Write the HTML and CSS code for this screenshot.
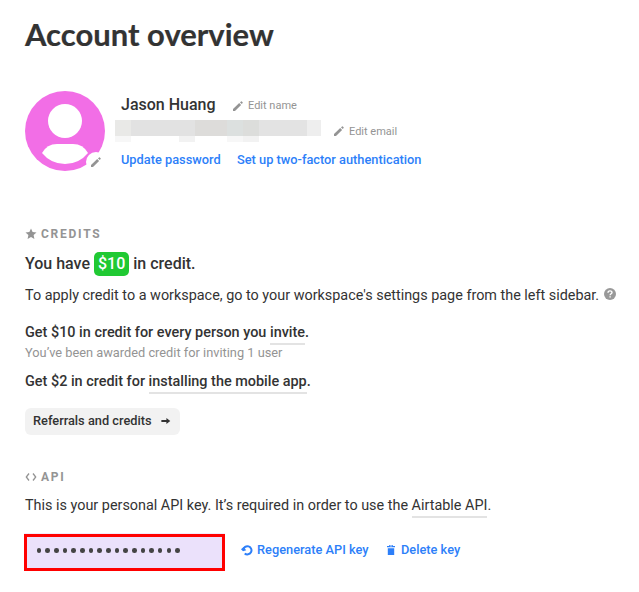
FILE: index.html
```
<!DOCTYPE html>
<html lang="en">
<head>
<meta charset="utf-8">
<title>Account overview</title>
<link rel="stylesheet" href="styles.css">
</head>
<body>
<svg width="0" height="0" class="defs">
  <symbol id="pencil" viewBox="0 0 12 12"><path d="M1 11V9L7.2 3.1l1.9 1.9L3 11zM8 2.4L9 1.4Q9.4 1 9.8 1.4l.8.8q.4.4 0 .8L9.8 4.1z"/></symbol>
</svg>
<main class="page">
  <h1 class="title">Account overview</h1>
  <section class="profile">
    <div class="avatar">
      <svg width="80" height="80" viewBox="0 0 80 80"><circle cx="40" cy="40" r="40" fill="#f26ee6"/><circle cx="40" cy="30" r="17" fill="#fff"/><path d="M17 62Q22 53 32 53H48Q58 53 63 62Q54 73 40 73T17 62Z" fill="#fff"/></svg>
      <span class="avatar-edit"><svg class="icon" width="12" height="12"><use href="#pencil"/></svg></span>
    </div>
    <div class="info">
      <div class="name-row"><span class="name">Jason Huang</span><a class="edit"><svg class="icon" width="12" height="12"><use href="#pencil"/></svg>Edit name</a></div>
      <div class="email-row">
        <svg class="redacted" width="206" height="22" shape-rendering="crispEdges"><path fill="#e9e9e7" d="M0 0h16v16H0z"/><path fill="#e2e2e2" d="M16 0h64v16H16z"/><path fill="#dddcda" d="M80 0h32v16H80z"/><path fill="#dce0df" d="M112 0h16v16h-16z"/><path fill="#dcdddb" d="M128 0h16v16h-16z"/><path fill="#e3e3e3" d="M144 0h48v16h-48z"/><path fill="#eee" d="M192 0h14v16h-14z"/><path fill="#f7f7f7" d="M0 16h16v6H0zM112 16h16v6h-16z"/><path fill="#f2f2f2" d="M64 16h16v6H64zM128 16h16v6h-16z"/></svg>
        <a class="edit"><svg class="icon" width="12" height="12"><use href="#pencil"/></svg>Edit email</a>
      </div>
      <div class="links"><a class="two-a">Update password</a><a class="two-b">Set up two-factor authentication</a></div>
    </div>
  </section>
  <section class="credits">
    <h2 class="label"><svg width="12" height="12" viewBox="0 0 12 12"><path fill="#949494" d="M6 .6l1.6 3.5 3.9.4-2.9 2.6.8 3.8L6 9l-3.4 1.9.8-3.8L.5 4.5l3.9-.4z"/></svg>CREDITS</h2>
    <p class="balance">You have <span class="amount">$10</span> in credit.</p>
    <p class="body apply"><span class="apply-text">To apply credit to a workspace, go to your workspace's settings page from the left sidebar.</span><svg width="12" height="12" viewBox="0 0 12 12"><circle cx="6" cy="6" r="6" fill="#999"/><path d="M4 4.8C4 2.3 8 2.3 8 4.5 8 5.8 6.1 5.8 6.1 7.3M6.1 8.2v1.4" fill="none" stroke="#fff" stroke-width="1.4"/></svg></p>
    <p class="body offer"><span>Get $10 in credit for every person you <a class="under">invite</a>.</span></p>
    <p class="awarded">You’ve been awarded credit for inviting 1 user</p>
    <p class="body offer second"><span>Get $2 in credit for <a class="under">installing the mobile app</a>.</span></p>
    <button class="button">Referrals and credits<svg width="10" height="8" viewBox="0 0 10 8"><path fill="#333" d="M.5 3.1H5.4V.9L9.3 4 5.4 7.1V4.9H.5Q0 4 .5 3.1z"/></svg></button>
  </section>
  <section class="api">
    <h2 class="label"><svg width="12" height="12" viewBox="0 0 12 12"><path fill="none" stroke="#949494" stroke-width="1.3" d="M4 2.5L1.3 6 4 9.5M8 2.5L10.7 6 8 9.5"/></svg>API</h2>
    <p class="body api-text"><span>This is your personal API key. It’s required in order to use the <a class="under">Airtable API</a>.</span></p>
    <div class="key-row">
      <div class="key"><i></i><i></i><i></i><i></i><i></i><i></i><i></i><i></i><i></i><i></i><i></i><i></i><i></i><i></i><i></i><i></i><i></i></div>
      <a class="action regen"><svg width="12" height="12" viewBox="0 0 12 12"><path fill="none" stroke="#2d7ff9" stroke-width="2" d="M2.3 5.9A4.1 4.1 0 1 1 3.7 9.4"/><path fill="#2d7ff9" d="M0 5.3L2.6 3 5.2 6.2 2 7.3z"/></svg>Regenerate API key</a>
      <a class="action"><svg width="12" height="12" viewBox="0 0 12 12"><path fill="#2d7ff9" d="M2 2.1h2.2V1h3.6v1.1H10v1.2H2zM2.8 4.3h6.4V11H2.8z"/><path stroke="#fff" stroke-width=".8" d="M5 1.9h2"/></svg>Delete key</a>
    </div>
  </section>
</main>
</body>
</html>
```
FILE: styles.css
```
* { box-sizing: border-box; }
body { margin: 0; background: #fff; color: #333; font-family: Roboto, sans-serif; font-size: 12.8px; }
h1, h2, p { margin: 0; }
svg { display: block; flex: none; }
.defs { position: absolute; }
.page { padding: 15px 0 0 25px; white-space: nowrap; }
.title { height: 40px; line-height: 39px; font-family: Lato, sans-serif; font-weight: 700; font-size: 31px; -webkit-text-stroke: 0.2px #333; }
.icon { fill: #949494; }
.profile { display: flex; margin-top: 36px; height: 80px; }
.avatar { position: relative; width: 80px; height: 80px; }
.avatar-edit { position: absolute; left: 61px; top: 61px; width: 20px; height: 20px; border-radius: 50%; background: #fff; display: flex; align-items: center; justify-content: center; }
.info { padding-left: 10px; }
.name-row { display: flex; align-items: center; height: 29px; padding-left: 6px; }
.name { width: 111px; padding-bottom: 2px; font-size: 16px; font-weight: 500; }
.edit { display: flex; align-items: center; gap: 4px; color: #949494; font-size: 11px; }
.email-row { display: flex; gap: 12px; height: 22px; }
.links { display: flex; height: 36px; line-height: 36px; padding-left: 6px; color: #2d7ff9; font-weight: 500; }
.two-a { width: 116px; }
.credits { margin-top: 54px; }
.label { display: flex; align-items: center; gap: 4px; height: 18px; color: #949494; font-size: 12px; font-weight: 700; letter-spacing: 1.75px; }
.balance { display: flex; height: 24px; line-height: 23px; margin-top: 9px; font-size: 16px; font-weight: 500; white-space: pre; }
.amount { height: 24px; padding: 0 4px; border-radius: 5px; background: #20c933; color: #fff; }
.body { display: flex; align-items: center; height: 24px; font-size: 14.4px; }
.apply { margin-top: 7px; gap: 5px; }
.apply svg { margin-bottom: 2px; }
.offer { margin-top: 13px; font-weight: 500; font-size: 14.43px; }
.under { padding-bottom: 2px; border-bottom: 2px solid #e3e3e3; }
.awarded { height: 16px; line-height: 18px; color: #949494; }
.second { margin-top: 9px; }
.button { display: flex; align-items: center; justify-content: space-between; width: 155px; height: 27px; margin-top: 15px; padding: 0 9px 2px 8px; border: 0; border-radius: 6px; background: #f2f2f2; color: #333; font: 500 12.8px Roboto, sans-serif; }
.api { margin-top: 33px; }
.api-text { margin-top: 7px; }
.key-row { display: flex; align-items: center; margin: 17px 0 0 -1px; height: 37px; }
.key { display: flex; align-items: center; gap: 4.07px; width: 201px; height: 37px; padding: 0 0 4px 9.7px; border: 3px solid #f00; background: #ebe1fb; box-shadow: 0 -1px #f2ecfb; }
.key i { width: 4.6px; height: 4.6px; border-radius: 50%; background: #444; }
.action { display: flex; align-items: center; gap: 4px; padding-bottom: 6px; color: #2d7ff9; font-weight: 500; }
.regen { margin: 0 16px; width: 128px; }
```
